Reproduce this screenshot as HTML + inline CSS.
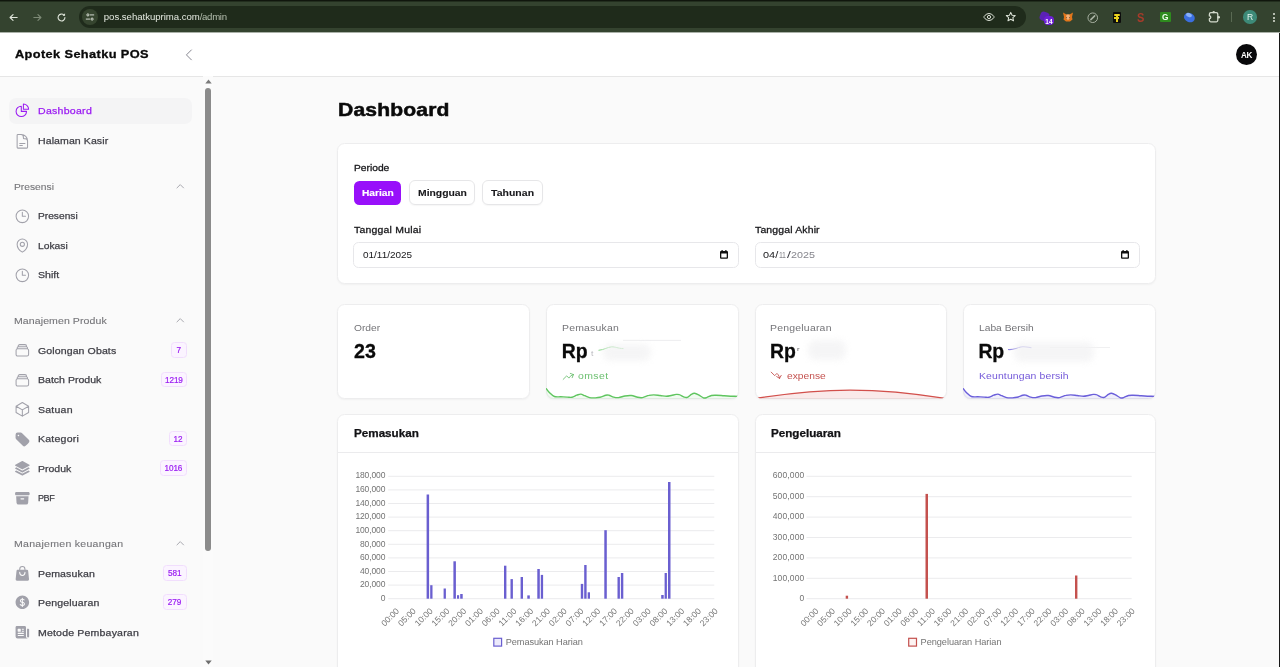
<!DOCTYPE html>
<html lang="id"><head><meta charset="utf-8"><title>Apotek Sehatku POS</title>
<style>
html,body{margin:0;padding:0}
body{width:1280px;height:667px;overflow:hidden;position:relative;background:#fafafa;font-family:'Liberation Sans',sans-serif;}
svg{overflow:visible}
</style></head><body>
<div id="root" style="position:absolute;left:0;top:0;width:1280px;height:667px;will-change:transform">
<div style="position:absolute;left:0px;top:0px;width:1280px;height:32px;background:#34432f"></div>
<div style="position:absolute;left:0px;top:0px;width:1280px;height:1px;background:#10160d"></div>
<div style="position:absolute;left:0px;top:1px;width:1280px;height:1px;background:#222e1e"></div>
<div style="position:absolute;left:79px;top:5.5px;width:947px;height:22.5px;background:#1f2b1b;border-radius:11.5px"></div>
<svg style="position:absolute;left:7.5px;top:11.5px" width="11" height="11" viewBox="0 0 24 24" ><path d="M20 12H5M11 5.5 4.5 12l6.5 6.5" fill="none" stroke="#dfe5da" stroke-width="2.4" stroke-linecap="round" stroke-linejoin="round"/></svg>
<svg style="position:absolute;left:31.5px;top:11.5px" width="11" height="11" viewBox="0 0 24 24" ><path d="M4 12h15M13 5.5l6.500 6.5-6.500 6.500" fill="none" stroke="#7d8a76" stroke-width="2.4" stroke-linecap="round" stroke-linejoin="round"/></svg>
<svg style="position:absolute;left:55.8px;top:11.5px" width="11" height="11" viewBox="0 0 24 24" ><path d="M19.500 12a7.500 7.500 0 1 1-2.200-5.300" fill="none" stroke="#dfe5da" stroke-width="2.400" stroke-linecap="round"/><path d="M19.800 2.500v5.500h-5.500z" fill="#dfe5da"/></svg>
<div style="position:absolute;left:82px;top:9px;width:16px;height:16px;background:#36452f;border-radius:50%"></div>
<svg style="position:absolute;left:85px;top:12px" width="10" height="10" viewBox="0 0 24 24" ><circle cx="7" cy="7" r="2.600" fill="none" stroke="#e3e8df" stroke-width="2.200"/><path d="M13 7h8M3 17h8" stroke="#e3e8df" stroke-width="2.200" stroke-linecap="round"/><circle cx="17" cy="17" r="2.600" fill="none" stroke="#e3e8df" stroke-width="2.200"/></svg>
<span style="position:absolute;left:103.82px;top:12px;font-size:9.6px;line-height:1;font-weight:400;color:#e4e9e0;letter-spacing:-0.032px;white-space:pre;">pos.sehatkuprima.com</span>
<span style="position:absolute;left:199.71px;top:12px;font-size:9.6px;line-height:1;font-weight:400;color:#b4beae;letter-spacing:-0.302px;white-space:pre;">/admin</span>
<svg style="position:absolute;left:983px;top:11px" width="12" height="12" viewBox="0 0 24 24" ><path d="M1.500 12S5.500 5 12 5s10.500 7 10.500 7-4 7-10.500 7S1.500 12 1.500 12Z" fill="none" stroke="#dfe5da" stroke-width="2"/><circle cx="12" cy="12" r="3.200" fill="none" stroke="#dfe5da" stroke-width="2"/></svg>
<svg style="position:absolute;left:1005px;top:11px" width="11.5" height="11.5" viewBox="0 0 24 24" ><path d="M12 2.800l2.800 6 6.500.700-4.900 4.400 1.400 6.500L12 17.100l-5.800 3.300 1.400-6.500L2.700 9.500l6.500-.700z" fill="none" stroke="#dfe5da" stroke-width="2.100" stroke-linejoin="round"/></svg>
<div style="position:absolute;left:1040px;top:12px;width:9px;height:9px;background:#5b21b6;border-radius:3px;transform:rotate(20deg)"></div>
<div style="position:absolute;left:1044px;top:16px;width:10px;height:9px;background:#6d1fd6;border-radius:4px"></div>
<span style="position:absolute;left:1045.34px;top:19px;font-size:6.5px;line-height:1;font-weight:700;color:#fff;letter-spacing:-0.031px;white-space:pre;">14</span>
<svg style="position:absolute;left:1062px;top:11px" width="12" height="12" viewBox="0 0 24 24" ><path d="M2 3l7 4h6l7-4-2 9 1 5-5 4h-8l-5-4 1-5z" fill="#e2761b"/><path d="M9 7h6l1 8-4 3-4-3z" fill="#f5b27a"/><path d="M8 13l2 1M16 13l-2 1" stroke="#3a2a1a" stroke-width="1.500"/></svg>
<svg style="position:absolute;left:1086.5px;top:11.7px" width="11.5" height="11.5" viewBox="0 0 24 24" ><circle cx="12" cy="12" r="10" fill="none" stroke="#aab3a4" stroke-width="2"/><path d="M8 16l8-8" stroke="#aab3a4" stroke-width="3.200" stroke-linecap="round"/></svg>
<div style="position:absolute;left:1112.5px;top:11.5px;width:8.5px;height:11px;background:#0d0d0d;border-radius:1px"></div>
<div style="position:absolute;left:1114px;top:13.5px;width:5.5px;height:2px;background:#e8d21d;border-radius:1px"></div>
<div style="position:absolute;left:1115.8px;top:15px;width:2px;height:6.5px;background:#e8d21d"></div>
<div style="position:absolute;left:1114.3px;top:17.3px;width:5px;height:1.4px;background:#e8d21d"></div>
<span style="position:absolute;left:1136.90px;top:12px;font-size:12px;line-height:1;font-weight:700;color:#a63b2a;letter-spacing:0.000px;white-space:pre;transform:scaleX(0.9216);transform-origin:0 0;">S</span>
<div style="position:absolute;left:1160px;top:12px;width:10.5px;height:10.2px;background:#2e8b1e;border-radius:1px"></div>
<span style="position:absolute;left:1162.28px;top:13px;font-size:8.5px;line-height:1;font-weight:700;color:#f0fff0;letter-spacing:0.000px;white-space:pre;transform:scaleX(0.9762);transform-origin:0 0;">G</span>
<div style="position:absolute;left:1184px;top:13px;width:10.5px;height:8.5px;background:#3b6fe0;border-radius:50%;transform:rotate(25deg)"></div>
<div style="position:absolute;left:1185.5px;top:12.5px;width:6px;height:4px;background:#9cc0ff;border-radius:50%;transform:rotate(25deg);opacity:.8"></div>
<svg style="position:absolute;left:1206.700px;top:8.700px" width="16" height="16" viewBox="0 0 16 16"><path d="M3.900 3.700H9.300a1.500 1.500 0 0 1 1.500 1.500V11.300a1.500 1.500 0 0 1-1.500 1.500H3.900a1.500 1.500 0 0 1-1.500-1.500V9.700a1.400 1.400 0 0 0 0-2.800V5.200a1.500 1.500 0 0 1 1.500-1.500z" fill="none" stroke="#d3dbcd" stroke-width="1.300" stroke-linejoin="round"/><circle cx="6.700" cy="3.100" r="1.200" fill="#d3dbcd"/><circle cx="11.700" cy="8.300" r="1.300" fill="#d3dbcd"/></svg>
<div style="position:absolute;left:1231.3px;top:11.5px;width:1px;height:10.5px;background:#5a6a53"></div>
<div style="position:absolute;left:1243px;top:10.3px;width:13.5px;height:13.5px;background:#3d8a78;border-radius:50%"></div>
<span style="position:absolute;left:1246.91px;top:13px;font-size:8.5px;line-height:1;font-weight:400;color:#e8f5f0;letter-spacing:0.000px;white-space:pre;transform:scaleX(1.0053);transform-origin:0 0;">R</span>
<div style="position:absolute;left:1273.2px;top:13.2px;width:2px;height:2px;background:#dfe5da;border-radius:50%"></div>
<div style="position:absolute;left:1273.2px;top:16.6px;width:2px;height:2px;background:#dfe5da;border-radius:50%"></div>
<div style="position:absolute;left:1273.2px;top:20px;width:2px;height:2px;background:#dfe5da;border-radius:50%"></div>
<div style="position:absolute;left:0px;top:32px;width:1280px;height:44.3px;background:#fff"></div>
<div style="position:absolute;left:0px;top:32px;width:1280px;height:1px;background:#aab1a8"></div>
<div style="position:absolute;left:0px;top:76.3px;width:1280px;height:1px;background:#e6e6e6"></div>
<div style="position:absolute;left:1279px;top:33px;width:1px;height:634px;background:#181818"></div>
<span style="position:absolute;left:15.11px;top:49px;font-size:11px;line-height:1;font-weight:700;color:#0a0a0a;letter-spacing:0.333px;white-space:pre;transform:scaleX(1.1600);transform-origin:0 0;-webkit-text-stroke:0.3px #0a0a0a;">Apotek Sehatku POS</span>
<svg style="position:absolute;left:181.1px;top:46.6px" width="15.8" height="15.8" viewBox="0 0 24 24" ><path d="M15.75 19.5 8.25 12l7.5-7.5" fill="none" stroke="#85858f" stroke-width="1.5" stroke-linecap="round" stroke-linejoin="round"/></svg>
<div style="position:absolute;left:1235.8px;top:43.9px;width:21.2px;height:21.2px;background:#09090b;border-radius:50%"></div>
<span style="position:absolute;left:1241.46px;top:51px;font-size:8.6px;line-height:1;font-weight:700;color:#fff;letter-spacing:-0.450px;white-space:pre;transform:scaleX(0.9431);transform-origin:0 0;">AK</span>
<div style="position:absolute;left:203px;top:76px;width:10px;height:591px;background:#fbfbfb"></div>
<svg style="position:absolute;left:204.500px;top:78.800px" width="7" height="5" viewBox="0 0 7 5"><path d="M3.500 .5 6.700 4.500H.3z" fill="#7a7a7a"/></svg>
<div style="position:absolute;left:205.3px;top:88.3px;width:6px;height:463px;background:#8b8b8b;border-radius:3px"></div>
<svg style="position:absolute;left:204.500px;top:659.500px" width="7" height="5" viewBox="0 0 7 5"><path d="M3.500 4.500 6.700 .5H.3z" fill="#6e6e6e"/></svg>
<div style="position:absolute;left:9.4px;top:97.7px;width:183px;height:26.8px;background:#f4f4f5;border-radius:7px"></div>
<svg style="position:absolute;left:14.1px;top:102.45px" width="16.7" height="16.7" viewBox="0 0 24 24" ><path d="M10.5 6a7.5 7.5 0 1 0 7.5 7.5h-7.5V6Z" fill="none" stroke="#9b1cf2" stroke-width="1.5" stroke-linecap="round" stroke-linejoin="round"/><path d="M13.5 10.5H21A7.5 7.5 0 0 0 13.5 3v7.5Z" fill="none" stroke="#9b1cf2" stroke-width="1.5" stroke-linecap="round" stroke-linejoin="round"/></svg>
<span style="position:absolute;left:38.28px;top:107px;font-size:9.1px;line-height:1;font-weight:400;color:#9b1cf2;letter-spacing:0.233px;white-space:pre;transform:scaleX(1.1600);transform-origin:0 0;-webkit-text-stroke:0.25px #9b1cf2;">Dashboard</span>
<svg style="position:absolute;left:14.1px;top:132.55px" width="16.7" height="16.7" viewBox="0 0 24 24" ><path d="M19.5 14.25v-2.625a3.375 3.375 0 0 0-3.375-3.375h-1.5A1.125 1.125 0 0 1 13.5 7.125v-1.5a3.375 3.375 0 0 0-3.375-3.375H8.25m0 12.75h7.5m-7.5 3H12M10.5 2.25H5.625c-.621 0-1.125.504-1.125 1.125v17.25c0 .621.504 1.125 1.125 1.125h12.750c.621 0 1.125-.504 1.125-1.125V11.250a9 9 0 0 0-9-9Z" fill="none" stroke="#a1a1aa" stroke-width="1.5" stroke-linecap="round" stroke-linejoin="round"/></svg>
<span style="position:absolute;left:38.12px;top:137px;font-size:9.1px;line-height:1;font-weight:400;color:#3f3f46;letter-spacing:0.070px;white-space:pre;transform:scaleX(1.1600);transform-origin:0 0;-webkit-text-stroke:0.25px #3f3f46;">Halaman Kasir</span>
<span style="position:absolute;left:14.34px;top:183px;font-size:9.1px;line-height:1;font-weight:400;color:#747478;letter-spacing:0.000px;white-space:pre;transform:scaleX(1.1286);transform-origin:0 0;-webkit-text-stroke:0.1px #747478;">Presensi</span>
<svg style="position:absolute;left:175.3px;top:180.6px" width="10.5" height="10.5" viewBox="0 0 24 24" ><path d="m4.5 15.75 7.5-7.5 7.5 7.5" fill="none" stroke="#85858f" stroke-width="1.6" stroke-linecap="round" stroke-linejoin="round"/></svg>
<svg style="position:absolute;left:14.1px;top:207.55px" width="16.7" height="16.7" viewBox="0 0 24 24" ><path d="M12 6v6h4.5m4.5 0a9 9 0 1 1-18 0 9 9 0 0 1 18 0Z" fill="none" stroke="#a1a1aa" stroke-width="1.5" stroke-linecap="round" stroke-linejoin="round"/></svg>
<span style="position:absolute;left:38.16px;top:212px;font-size:9.1px;line-height:1;font-weight:400;color:#3f3f46;letter-spacing:0.000px;white-space:pre;transform:scaleX(1.1218);transform-origin:0 0;-webkit-text-stroke:0.25px #3f3f46;">Presensi</span>
<svg style="position:absolute;left:14.1px;top:237.05px" width="16.7" height="16.7" viewBox="0 0 24 24" ><path d="M15 10.5a3 3 0 1 1-6 0 3 3 0 0 1 6 0Z" fill="none" stroke="#a1a1aa" stroke-width="1.5" stroke-linecap="round" stroke-linejoin="round"/><path d="M19.5 10.5c0 7.142-7.5 11.250-7.5 11.250S4.5 17.642 4.500 10.500a7.500 7.500 0 1 1 15 0Z" fill="none" stroke="#a1a1aa" stroke-width="1.5" stroke-linecap="round" stroke-linejoin="round"/></svg>
<span style="position:absolute;left:38.08px;top:242px;font-size:9.1px;line-height:1;font-weight:400;color:#3f3f46;letter-spacing:0.000px;white-space:pre;transform:scaleX(1.1321);transform-origin:0 0;-webkit-text-stroke:0.25px #3f3f46;">Lokasi</span>
<svg style="position:absolute;left:14.1px;top:266.55px" width="16.7" height="16.7" viewBox="0 0 24 24" ><path d="M12 6v6h4.5m4.5 0a9 9 0 1 1-18 0 9 9 0 0 1 18 0Z" fill="none" stroke="#a1a1aa" stroke-width="1.5" stroke-linecap="round" stroke-linejoin="round"/></svg>
<span style="position:absolute;left:38.27px;top:271px;font-size:9.1px;line-height:1;font-weight:400;color:#3f3f46;letter-spacing:0.003px;white-space:pre;transform:scaleX(1.1600);transform-origin:0 0;-webkit-text-stroke:0.25px #3f3f46;">Shift</span>
<span style="position:absolute;left:14.04px;top:317px;font-size:9.1px;line-height:1;font-weight:400;color:#747478;letter-spacing:0.069px;white-space:pre;transform:scaleX(1.1600);transform-origin:0 0;-webkit-text-stroke:0.1px #747478;">Manajemen Produk</span>
<svg style="position:absolute;left:175.3px;top:315.00000000000006px" width="10.5" height="10.5" viewBox="0 0 24 24" ><path d="m4.5 15.75 7.5-7.5 7.5 7.5" fill="none" stroke="#85858f" stroke-width="1.6" stroke-linecap="round" stroke-linejoin="round"/></svg>
<svg style="position:absolute;left:14.1px;top:342.25px" width="16.7" height="16.7" viewBox="0 0 24 24" ><path d="M6 6.878V6a2.250 2.250 0 0 1 2.250-2.250h7.500A2.250 2.250 0 0 1 18 6v.878m-12 0c.235-.083.487-.128.750-.128h10.500c.263 0 .515.045.750.128m-12 0A2.250 2.250 0 0 0 4.500 9v.878m13.500-3A2.250 2.250 0 0 1 19.500 9v.878m0 0a2.246 2.246 0 0 0-.750-.128H5.250c-.263 0-.515.045-.750.128m15 0A2.250 2.250 0 0 1 21 12v6a2.250 2.250 0 0 1-2.250 2.250H5.250A2.250 2.250 0 0 1 3 18v-6c0-.980.626-1.813 1.500-2.122" fill="none" stroke="#a1a1aa" stroke-width="1.5" stroke-linecap="round" stroke-linejoin="round"/></svg>
<span style="position:absolute;left:38.37px;top:347px;font-size:9.1px;line-height:1;font-weight:400;color:#3f3f46;letter-spacing:0.090px;white-space:pre;transform:scaleX(1.1600);transform-origin:0 0;-webkit-text-stroke:0.25px #3f3f46;">Golongan Obats</span>
<div style="position:absolute;left:171px;top:342.20000000000005px;width:15.599999999999994px;height:15.4px;background:#fbf4ff;border:1px solid #f1defd;border-radius:3.5px;box-sizing:border-box"></div>
<span style="position:absolute;left:176.52px;top:347px;font-size:8.2px;line-height:1;font-weight:400;color:#9b1cf2;letter-spacing:-0.100px;white-space:pre;-webkit-text-stroke:0.2px #9b1cf2;">7</span>
<svg style="position:absolute;left:14.1px;top:371.75px" width="16.7" height="16.7" viewBox="0 0 24 24" ><path d="M6 6.878V6a2.250 2.250 0 0 1 2.250-2.250h7.500A2.250 2.250 0 0 1 18 6v.878m-12 0c.235-.083.487-.128.750-.128h10.500c.263 0 .515.045.750.128m-12 0A2.250 2.250 0 0 0 4.500 9v.878m13.500-3A2.250 2.250 0 0 1 19.500 9v.878m0 0a2.246 2.246 0 0 0-.750-.128H5.250c-.263 0-.515.045-.750.128m15 0A2.250 2.250 0 0 1 21 12v6a2.250 2.250 0 0 1-2.250 2.250H5.250A2.250 2.250 0 0 1 3 18v-6c0-.980.626-1.813 1.500-2.122" fill="none" stroke="#a1a1aa" stroke-width="1.5" stroke-linecap="round" stroke-linejoin="round"/></svg>
<span style="position:absolute;left:38.12px;top:376px;font-size:9.1px;line-height:1;font-weight:400;color:#3f3f46;letter-spacing:0.000px;white-space:pre;transform:scaleX(1.1594);transform-origin:0 0;-webkit-text-stroke:0.25px #3f3f46;">Batch Produk</span>
<div style="position:absolute;left:161.3px;top:371.70000000000005px;width:25.299999999999983px;height:15.4px;background:#fbf4ff;border:1px solid #f1defd;border-radius:3.5px;box-sizing:border-box"></div>
<span style="position:absolute;left:164.99px;top:377px;font-size:8.2px;line-height:1;font-weight:400;color:#9b1cf2;letter-spacing:-0.100px;white-space:pre;-webkit-text-stroke:0.2px #9b1cf2;">1219</span>
<svg style="position:absolute;left:14.1px;top:401.25px" width="16.7" height="16.7" viewBox="0 0 24 24" ><path d="m21 7.500-9-5.250L3 7.500m18 0-9 5.250m9-5.250v9l-9 5.250M3 7.500l9 5.250M3 7.500v9l9 5.250m0-9v9" fill="none" stroke="#a1a1aa" stroke-width="1.5" stroke-linecap="round" stroke-linejoin="round"/></svg>
<span style="position:absolute;left:38.42px;top:406px;font-size:9.1px;line-height:1;font-weight:400;color:#3f3f46;letter-spacing:0.191px;white-space:pre;transform:scaleX(1.1600);transform-origin:0 0;-webkit-text-stroke:0.25px #3f3f46;">Satuan</span>
<svg style="position:absolute;left:14.1px;top:430.75px" width="16.7" height="16.7" viewBox="0 0 24 24" ><path d="M5.250 2.250a3 3 0 0 0-3 3v4.318a3 3 0 0 0 .879 2.121l9.580 9.581c.920.920 2.390 1.186 3.548.428a18.849 18.849 0 0 0 5.441-5.440c.758-1.160.492-2.629-.428-3.548l-9.580-9.581a3 3 0 0 0-2.122-.879H5.250ZM6.375 7.500a1.125 1.125 0 1 0 0-2.250 1.125 1.125 0 0 0 0 2.250Z" fill="#a1a1aa" fill-rule="evenodd" clip-rule="evenodd"/></svg>
<span style="position:absolute;left:38.44px;top:435px;font-size:9.1px;line-height:1;font-weight:400;color:#3f3f46;letter-spacing:0.185px;white-space:pre;transform:scaleX(1.1600);transform-origin:0 0;-webkit-text-stroke:0.25px #3f3f46;">Kategori</span>
<div style="position:absolute;left:169.3px;top:430.70000000000005px;width:17.299999999999983px;height:15.4px;background:#fbf4ff;border:1px solid #f1defd;border-radius:3.5px;box-sizing:border-box"></div>
<span style="position:absolute;left:173.45px;top:436px;font-size:8.2px;line-height:1;font-weight:400;color:#9b1cf2;letter-spacing:-0.100px;white-space:pre;-webkit-text-stroke:0.2px #9b1cf2;">12</span>
<svg style="position:absolute;left:14.1px;top:460.25px" width="16.7" height="16.7" viewBox="0 0 24 24" ><path d="M11.644 1.590a.750.750 0 0 1 .712 0l9.750 5.250a.750.750 0 0 1 0 1.320l-9.750 5.250a.750.750 0 0 1-.712 0l-9.750-5.250a.750.750 0 0 1 0-1.320l9.750-5.250Z" fill="#a1a1aa" fill-rule="evenodd" clip-rule="evenodd"/><path d="m3.265 10.602 7.668 4.129a2.250 2.250 0 0 0 2.134 0l7.668-4.130 1.370.739a.750.750 0 0 1 0 1.320l-9.750 5.250a.750.750 0 0 1-.710 0l-9.750-5.250a.750.750 0 0 1 0-1.320l1.370-.738Z" fill="#a1a1aa" fill-rule="evenodd" clip-rule="evenodd"/><path d="m10.933 19.231-7.668-4.130-1.370.739a.750.750 0 0 0 0 1.320l9.750 5.250c.221.120.489.120.710 0l9.750-5.250a.750.750 0 0 0 0-1.320l-1.370-.738-7.668 4.130a2.250 2.250 0 0 1-2.134-.001Z" fill="#a1a1aa" fill-rule="evenodd" clip-rule="evenodd"/></svg>
<span style="position:absolute;left:38.30px;top:465px;font-size:9.1px;line-height:1;font-weight:400;color:#3f3f46;letter-spacing:0.000px;white-space:pre;transform:scaleX(1.1541);transform-origin:0 0;-webkit-text-stroke:0.25px #3f3f46;">Produk</span>
<div style="position:absolute;left:160.3px;top:460.20000000000005px;width:26.299999999999983px;height:15.4px;background:#fbf4ff;border:1px solid #f1defd;border-radius:3.5px;box-sizing:border-box"></div>
<span style="position:absolute;left:164.49px;top:465px;font-size:8.2px;line-height:1;font-weight:400;color:#9b1cf2;letter-spacing:-0.100px;white-space:pre;-webkit-text-stroke:0.2px #9b1cf2;">1016</span>
<svg style="position:absolute;left:14.1px;top:489.75px" width="16.7" height="16.7" viewBox="0 0 24 24" ><path d="M3.375 3C2.339 3 1.500 3.840 1.500 4.875v.750c0 1.036.840 1.875 1.875 1.875h17.250c1.035 0 1.875-.840 1.875-1.875v-.750C22.500 3.839 21.660 3 20.625 3H3.375Z" fill="#a1a1aa" fill-rule="evenodd" clip-rule="evenodd"/><path d="m3.087 9 .540 9.176A3 3 0 0 0 6.620 21h10.757a3 3 0 0 0 2.995-2.824L20.913 9H3.087Zm6.163 3.750A.750.750 0 0 1 10 12h4a.750.750 0 0 1 0 1.500h-4a.750.750 0 0 1-.750-.750Z" fill="#a1a1aa" fill-rule="evenodd" clip-rule="evenodd"/></svg>
<span style="position:absolute;left:38.27px;top:494px;font-size:9.1px;line-height:1;font-weight:400;color:#3f3f46;letter-spacing:-0.450px;white-space:pre;transform:scaleX(0.9951);transform-origin:0 0;-webkit-text-stroke:0.25px #3f3f46;">PBF</span>
<span style="position:absolute;left:14.19px;top:540px;font-size:9.1px;line-height:1;font-weight:400;color:#747478;letter-spacing:0.236px;white-space:pre;transform:scaleX(1.1600);transform-origin:0 0;-webkit-text-stroke:0.1px #747478;">Manajemen keuangan</span>
<svg style="position:absolute;left:175.3px;top:537.7px" width="10.5" height="10.5" viewBox="0 0 24 24" ><path d="m4.5 15.75 7.5-7.5 7.5 7.5" fill="none" stroke="#85858f" stroke-width="1.6" stroke-linecap="round" stroke-linejoin="round"/></svg>
<svg style="position:absolute;left:14.1px;top:565.4499999999999px" width="16.7" height="16.7" viewBox="0 0 24 24" ><path d="M7.500 6v.750H5.513c-.960 0-1.764.724-1.865 1.679l-1.263 12A1.875 1.875 0 0 0 4.250 22.500h15.500a1.875 1.875 0 0 0 1.865-2.071l-1.263-12a1.875 1.875 0 0 0-1.865-1.679H16.500V6a4.500 4.500 0 1 0-9 0ZM12 3a3 3 0 0 0-3 3v.750h6V6a3 3 0 0 0-3-3Zm-3 8.250a3 3 0 1 0 6 0v-.750a.750.750 0 0 1 1.500 0v.750a4.500 4.500 0 1 1-9 0v-.750a.750.750 0 0 1 1.500 0v.750Z" fill="#a1a1aa" fill-rule="evenodd" clip-rule="evenodd"/></svg>
<span style="position:absolute;left:38.12px;top:570px;font-size:9.1px;line-height:1;font-weight:400;color:#3f3f46;letter-spacing:0.114px;white-space:pre;transform:scaleX(1.1600);transform-origin:0 0;-webkit-text-stroke:0.25px #3f3f46;">Pemasukan</span>
<div style="position:absolute;left:163.1px;top:565.4px;width:23.5px;height:15.4px;background:#fbf4ff;border:1px solid #f1defd;border-radius:3.5px;box-sizing:border-box"></div>
<span style="position:absolute;left:168.11px;top:570px;font-size:8.2px;line-height:1;font-weight:400;color:#9b1cf2;letter-spacing:-0.100px;white-space:pre;-webkit-text-stroke:0.2px #9b1cf2;">581</span>
<svg style="position:absolute;left:14.1px;top:594.4499999999999px" width="16.7" height="16.7" viewBox="0 0 24 24" ><path d="M10.464 8.746c.227-.180.497-.311.786-.394v2.795a2.252 2.252 0 0 1-.786-.393c-.394-.313-.546-.681-.546-1.004 0-.323.152-.691.546-1.004ZM12.750 15.662v-2.824c.347.085.664.228.921.421.427.320.579.686.579.991 0 .305-.152.671-.579.991a2.534 2.534 0 0 1-.921.420Z" fill="#a1a1aa" fill-rule="evenodd" clip-rule="evenodd"/><path d="M12 2.250c-5.385 0-9.750 4.365-9.750 9.750s4.365 9.750 9.750 9.750 9.750-4.365 9.750-9.750S17.385 2.250 12 2.250ZM12.750 6a.750.750 0 0 0-1.500 0v.816a3.836 3.836 0 0 0-1.720.756c-.712.566-1.112 1.350-1.112 2.178 0 .829.400 1.612 1.113 2.178.502.400 1.102.647 1.719.756v2.978a2.536 2.536 0 0 1-.921-.421l-.879-.660a.750.750 0 0 0-.900 1.200l.879.660c.533.400 1.169.645 1.821.750V18a.750.750 0 0 0 1.500 0v-.810a4.124 4.124 0 0 0 1.821-.749c.745-.559 1.179-1.344 1.179-2.191 0-.847-.434-1.632-1.179-2.191a4.122 4.122 0 0 0-1.821-.750V8.354c.290.082.559.213.786.393l.415.330a.750.750 0 0 0 .933-1.175l-.415-.330a3.836 3.836 0 0 0-1.719-.755V6Z" fill="#a1a1aa" fill-rule="evenodd" clip-rule="evenodd"/></svg>
<span style="position:absolute;left:38.44px;top:599px;font-size:9.1px;line-height:1;font-weight:400;color:#3f3f46;letter-spacing:0.130px;white-space:pre;transform:scaleX(1.1600);transform-origin:0 0;-webkit-text-stroke:0.25px #3f3f46;">Pengeluaran</span>
<div style="position:absolute;left:162.5px;top:594.4px;width:24.099999999999994px;height:15.4px;background:#fbf4ff;border:1px solid #f1defd;border-radius:3.5px;box-sizing:border-box"></div>
<span style="position:absolute;left:167.81px;top:599px;font-size:8.2px;line-height:1;font-weight:400;color:#9b1cf2;letter-spacing:-0.100px;white-space:pre;-webkit-text-stroke:0.2px #9b1cf2;">279</span>
<svg style="position:absolute;left:14.1px;top:623.9499999999999px" width="16.7" height="16.7" viewBox="0 0 24 24" ><path d="M4.125 3C3.089 3 2.250 3.840 2.250 4.875V18a3 3 0 0 0 3 3h15a3 3 0 0 1-3-3V4.875C17.250 3.839 16.410 3 15.375 3H4.125ZM12 9.750a.750.750 0 0 0 0 1.500h1.500a.750.750 0 0 0 0-1.500H12Zm-.750-2.250a.750.750 0 0 1 .750-.750h1.500a.750.750 0 0 1 0 1.500H12a.750.750 0 0 1-.750-.750ZM6 12.750a.750.750 0 0 0 0 1.500h7.500a.750.750 0 0 0 0-1.500H6Zm-.750 3.750a.750.750 0 0 1 .750-.750h7.500a.750.750 0 0 1 0 1.500H6a.750.750 0 0 1-.750-.750ZM6 6.750a.750.750 0 0 0-.750.750v3c0 .414.336.750.750.750h3a.750.750 0 0 0 .750-.750v-3A.750.750 0 0 0 9 6.750H6Z" fill="#a1a1aa" fill-rule="evenodd" clip-rule="evenodd"/><path d="M18.750 6.750h1.875c.621 0 1.125.504 1.125 1.125V18a1.500 1.500 0 0 1-3 0V6.750Z" fill="#a1a1aa" fill-rule="evenodd" clip-rule="evenodd"/></svg>
<span style="position:absolute;left:38.12px;top:629px;font-size:9.1px;line-height:1;font-weight:400;color:#3f3f46;letter-spacing:0.153px;white-space:pre;transform:scaleX(1.1600);transform-origin:0 0;-webkit-text-stroke:0.25px #3f3f46;">Metode Pembayaran</span>
<span style="position:absolute;left:337.53px;top:101px;font-size:18.2px;line-height:1;font-weight:700;color:#0a0a0a;letter-spacing:0.138px;white-space:pre;transform:scaleX(1.1600);transform-origin:0 0;-webkit-text-stroke:0.5px #0a0a0a;">Dashboard</span>
<div style="position:absolute;left:337px;top:143px;width:819px;height:141px;background:#fff;border:1px solid #ededee;border-radius:7.5px;box-shadow:0 1px 2px rgba(0,0,0,.04);box-sizing:border-box"></div>
<span style="position:absolute;left:353.80px;top:164px;font-size:9.0px;line-height:1;font-weight:400;color:#18181b;letter-spacing:0.000px;white-space:pre;transform:scaleX(1.1370);transform-origin:0 0;-webkit-text-stroke:0.28px #18181b;">Periode</span>
<div style="position:absolute;left:354px;top:181px;width:47.2px;height:24px;background:#9810fa;border-radius:5.5px"></div>
<span style="position:absolute;left:361.80px;top:189px;font-size:9.0px;line-height:1;font-weight:700;color:#fff;letter-spacing:-0.000px;white-space:pre;transform:scaleX(1.1315);transform-origin:0 0;-webkit-text-stroke:0.15px #fff;">Harian</span>
<div style="position:absolute;left:409px;top:180.4px;width:66.4px;height:25px;background:#fff;border:1px solid #e6e6e8;border-radius:6px;box-sizing:border-box;box-shadow:0 1px 1.5px rgba(0,0,0,.04)"></div>
<span style="position:absolute;left:417.77px;top:189px;font-size:9.0px;line-height:1;font-weight:700;color:#18181b;letter-spacing:0.000px;white-space:pre;transform:scaleX(1.1516);transform-origin:0 0;-webkit-text-stroke:0.1px #18181b;">Mingguan</span>
<div style="position:absolute;left:482px;top:180.4px;width:61px;height:25px;background:#fff;border:1px solid #e6e6e8;border-radius:6px;box-sizing:border-box;box-shadow:0 1px 1.5px rgba(0,0,0,.04)"></div>
<span style="position:absolute;left:491.33px;top:189px;font-size:9.0px;line-height:1;font-weight:700;color:#18181b;letter-spacing:0.042px;white-space:pre;transform:scaleX(1.1600);transform-origin:0 0;-webkit-text-stroke:0.1px #18181b;">Tahunan</span>
<span style="position:absolute;left:354.34px;top:226px;font-size:9.0px;line-height:1;font-weight:400;color:#18181b;letter-spacing:0.188px;white-space:pre;transform:scaleX(1.1600);transform-origin:0 0;-webkit-text-stroke:0.28px #18181b;">Tanggal Mulai</span>
<span style="position:absolute;left:754.69px;top:226px;font-size:9.0px;line-height:1;font-weight:400;color:#18181b;letter-spacing:0.137px;white-space:pre;transform:scaleX(1.1600);transform-origin:0 0;-webkit-text-stroke:0.28px #18181b;">Tanggal Akhir</span>
<div style="position:absolute;left:353px;top:242px;width:386px;height:25.5px;background:#fff;border:1px solid #e7e7ea;border-radius:5.5px;box-sizing:border-box"></div>
<div style="position:absolute;left:755px;top:242px;width:385px;height:25.5px;background:#fff;border:1px solid #e7e7ea;border-radius:5.5px;box-sizing:border-box"></div>
<span style="position:absolute;left:362.56px;top:250px;font-size:9.6px;line-height:1;font-weight:400;color:#18181b;letter-spacing:0.000px;white-space:pre;transform:scaleX(1.0372);transform-origin:0 0;">01/11/2025</span>
<span style="position:absolute;left:763.20px;top:250px;font-size:9.6px;line-height:1;font-weight:400;color:#18181b;letter-spacing:0.000px;white-space:pre;transform:scaleX(1.1391);transform-origin:0 0;">04/</span>
<span style="position:absolute;left:779.38px;top:250px;font-size:9.6px;line-height:1;font-weight:400;color:#85858c;letter-spacing:-0.450px;white-space:pre;transform:scaleX(0.7298);transform-origin:0 0;">11</span>
<span style="position:absolute;left:786.80px;top:250px;font-size:9.6px;line-height:1;font-weight:400;color:#3a3a40;letter-spacing:0.000px;white-space:pre;transform:scaleX(1.4222);transform-origin:0 0;">/</span>
<span style="position:absolute;left:791.23px;top:250px;font-size:9.6px;line-height:1;font-weight:400;color:#85858c;letter-spacing:0.000px;white-space:pre;transform:scaleX(1.1213);transform-origin:0 0;">2025</span>
<svg style="position:absolute;left:720.3px;top:250.300px" width="8" height="8.8" viewBox="0 0 16 17.600"><path d="M2 2.200h12a2 2 0 0 1 2 2v11.400a2 2 0 0 1-2 2H2a2 2 0 0 1-2-2V4.200a2 2 0 0 1 2-2Zm.6 4.600v8.200h10.800V6.800Z" fill="#111" fill-rule="evenodd"/><rect x="3" y="0" width="2.400" height="3.500" fill="#111"/><rect x="10.600" y="0" width="2.400" height="3.500" fill="#111"/></svg>
<svg style="position:absolute;left:1121.3px;top:250.300px" width="8" height="8.8" viewBox="0 0 16 17.600"><path d="M2 2.200h12a2 2 0 0 1 2 2v11.400a2 2 0 0 1-2 2H2a2 2 0 0 1-2-2V4.200a2 2 0 0 1 2-2Zm.6 4.600v8.200h10.800V6.800Z" fill="#111" fill-rule="evenodd"/><rect x="3" y="0" width="2.400" height="3.500" fill="#111"/><rect x="10.600" y="0" width="2.400" height="3.500" fill="#111"/></svg>
<div style="position:absolute;left:337px;top:304px;width:193px;height:95px;background:#fff;border:1px solid #ededee;border-radius:7.5px;box-shadow:0 1px 2px rgba(0,0,0,.04);box-sizing:border-box;overflow:hidden"></div>
<div style="position:absolute;left:546px;top:304px;width:193px;height:95px;background:#fff;border:1px solid #ededee;border-radius:7.5px;box-shadow:0 1px 2px rgba(0,0,0,.04);box-sizing:border-box;overflow:hidden"></div>
<div style="position:absolute;left:755px;top:304px;width:192px;height:95px;background:#fff;border:1px solid #ededee;border-radius:7.5px;box-shadow:0 1px 2px rgba(0,0,0,.04);box-sizing:border-box;overflow:hidden"></div>
<div style="position:absolute;left:963px;top:304px;width:193px;height:95px;background:#fff;border:1px solid #ededee;border-radius:7.5px;box-shadow:0 1px 2px rgba(0,0,0,.04);box-sizing:border-box;overflow:hidden"></div>
<span style="position:absolute;left:353.81px;top:324px;font-size:9.0px;line-height:1;font-weight:400;color:#747478;letter-spacing:0.000px;white-space:pre;transform:scaleX(1.1373);transform-origin:0 0;">Order</span>
<span style="position:absolute;left:353.84px;top:342px;font-size:19.4px;line-height:1;font-weight:700;color:#0a0a0a;letter-spacing:0.000px;white-space:pre;transform:scaleX(1.0126);transform-origin:0 0;-webkit-text-stroke:0.3px #0a0a0a;">23</span>
<span style="position:absolute;left:562.24px;top:324px;font-size:9.0px;line-height:1;font-weight:400;color:#747478;letter-spacing:0.180px;white-space:pre;transform:scaleX(1.1600);transform-origin:0 0;">Pemasukan</span>
<span style="position:absolute;left:561.83px;top:342px;font-size:19.4px;line-height:1;font-weight:700;color:#0a0a0a;letter-spacing:-0.064px;white-space:pre;-webkit-text-stroke:0.3px #0a0a0a;">Rp</span>
<span style="position:absolute;left:770.26px;top:324px;font-size:9.0px;line-height:1;font-weight:400;color:#747478;letter-spacing:0.194px;white-space:pre;transform:scaleX(1.1600);transform-origin:0 0;">Pengeluaran</span>
<span style="position:absolute;left:770.06px;top:342px;font-size:19.4px;line-height:1;font-weight:700;color:#0a0a0a;letter-spacing:-0.086px;white-space:pre;-webkit-text-stroke:0.3px #0a0a0a;">Rp</span>
<span style="position:absolute;left:978.81px;top:324px;font-size:9.0px;line-height:1;font-weight:400;color:#747478;letter-spacing:0.000px;white-space:pre;transform:scaleX(1.1379);transform-origin:0 0;">Laba Bersih</span>
<span style="position:absolute;left:978.53px;top:342px;font-size:19.4px;line-height:1;font-weight:700;color:#0a0a0a;letter-spacing:-0.152px;white-space:pre;-webkit-text-stroke:0.3px #0a0a0a;">Rp</span>
<svg style="position:absolute;left:562.4px;top:369.6px" width="12.5" height="12.5" viewBox="0 0 24 24" ><path d="M2.25 18 9 11.25l4.306 4.306a11.950 11.950 0 0 1 5.814-5.518l2.740-1.220m0 0-5.940-2.281m5.940 2.280-2.280 5.941" fill="none" stroke="#6cc070" stroke-width="1.7" stroke-linecap="round" stroke-linejoin="round"/></svg>
<span style="position:absolute;left:578.21px;top:372px;font-size:9.0px;line-height:1;font-weight:400;color:#6cc070;letter-spacing:0.347px;white-space:pre;transform:scaleX(1.1600);transform-origin:0 0;">omset</span>
<svg style="position:absolute;left:770.4px;top:369.4px" width="12.5" height="12.5" viewBox="0 0 24 24" ><path d="M2.25 6 9 12.75l4.286-4.286a11.948 11.948 0 0 1 4.306 6.430l.776 2.898m0 0 3.182-5.511m-3.182 5.510-5.511-3.181" fill="none" stroke="#c4524f" stroke-width="1.7" stroke-linecap="round" stroke-linejoin="round"/></svg>
<span style="position:absolute;left:786.60px;top:372px;font-size:9.0px;line-height:1;font-weight:400;color:#c4524f;letter-spacing:0.000px;white-space:pre;transform:scaleX(1.1372);transform-origin:0 0;">expense</span>
<span style="position:absolute;left:978.63px;top:372px;font-size:9.0px;line-height:1;font-weight:400;color:#7459d9;letter-spacing:0.103px;white-space:pre;transform:scaleX(1.1600);transform-origin:0 0;">Keuntungan bersih</span>
<svg style="position:absolute;left:0;top:0" width="1280" height="667" viewBox="0 0 1280 667"><defs><clipPath id="c546"><rect x="546" y="304" width="193" height="95" rx="7.5"/></clipPath></defs><g clip-path="url(#c546)"><path d="M546.1 388.3C546.7 389.1 548.2 391.4 549.6 392.8C551.0 394.2 552.5 395.8 554.4 396.5C556.3 397.2 558.7 396.7 560.8 396.8C562.9 396.9 565.3 397.0 567.2 397.1C569.1 397.2 570.4 397.6 572.0 397.3C573.6 397.0 575.3 395.7 576.8 395.2C578.3 394.7 579.5 394.0 580.8 394.1C582.1 394.2 583.3 395.1 584.8 395.7C586.3 396.3 588.0 397.2 589.6 397.6C591.2 398.0 592.8 397.9 594.5 397.9C596.2 397.8 598.1 397.8 600.0 397.3C601.9 396.9 604.2 395.6 605.7 395.2C607.2 394.8 607.6 394.9 608.9 395.2C610.2 395.5 612.1 396.7 613.7 397.1C615.3 397.5 616.6 397.8 618.5 397.6C620.4 397.4 622.8 396.4 624.9 396.0C627.0 395.6 629.2 395.3 631.3 395.5C633.4 395.7 635.8 396.9 637.7 397.3C639.6 397.7 640.6 397.9 642.5 397.6C644.4 397.3 647.0 395.8 648.9 395.4C650.8 394.9 651.8 394.9 653.7 394.9C655.6 394.9 658.0 395.3 660.1 395.5C662.2 395.7 664.6 396.3 666.5 396.3C668.4 396.3 669.7 395.8 671.3 395.5C672.9 395.2 674.8 394.5 676.1 394.4C677.4 394.3 678.0 394.2 679.3 394.7C680.6 395.1 682.8 396.7 684.1 397.1C685.4 397.5 686.1 397.8 687.3 397.3C688.5 396.9 690.1 395.1 691.3 394.4C692.5 393.7 693.3 393.2 694.5 393.3C695.7 393.4 697.1 394.1 698.6 394.9C700.1 395.7 702.1 397.4 703.4 397.9C704.7 398.3 705.3 398.0 706.6 397.6C707.9 397.2 709.8 395.9 711.4 395.5C713.0 395.1 714.1 395.2 716.2 395.2C718.3 395.2 721.1 395.5 724.2 395.7C727.3 395.9 732.1 396.2 734.6 396.3C737.1 396.4 738.3 396.5 739.0 396.5V400H546Z" fill="rgba(80,200,80,.08)"/><path d="M546.1 388.3C546.7 389.1 548.2 391.4 549.6 392.8C551.0 394.2 552.5 395.8 554.4 396.5C556.3 397.2 558.7 396.7 560.8 396.8C562.9 396.9 565.3 397.0 567.2 397.1C569.1 397.2 570.4 397.6 572.0 397.3C573.6 397.0 575.3 395.7 576.8 395.2C578.3 394.7 579.5 394.0 580.8 394.1C582.1 394.2 583.3 395.1 584.8 395.7C586.3 396.3 588.0 397.2 589.6 397.6C591.2 398.0 592.8 397.9 594.5 397.9C596.2 397.8 598.1 397.8 600.0 397.3C601.9 396.9 604.2 395.6 605.7 395.2C607.2 394.8 607.6 394.9 608.9 395.2C610.2 395.5 612.1 396.7 613.7 397.1C615.3 397.5 616.6 397.8 618.5 397.6C620.4 397.4 622.8 396.4 624.9 396.0C627.0 395.6 629.2 395.3 631.3 395.5C633.4 395.7 635.8 396.9 637.7 397.3C639.6 397.7 640.6 397.9 642.5 397.6C644.4 397.3 647.0 395.8 648.9 395.4C650.8 394.9 651.8 394.9 653.7 394.9C655.6 394.9 658.0 395.3 660.1 395.5C662.2 395.7 664.6 396.3 666.5 396.3C668.4 396.3 669.7 395.8 671.3 395.5C672.9 395.2 674.8 394.5 676.1 394.4C677.4 394.3 678.0 394.2 679.3 394.7C680.6 395.1 682.8 396.7 684.1 397.1C685.4 397.5 686.1 397.8 687.3 397.3C688.5 396.9 690.1 395.1 691.3 394.4C692.5 393.7 693.3 393.2 694.5 393.3C695.7 393.4 697.1 394.1 698.6 394.9C700.1 395.7 702.1 397.4 703.4 397.9C704.7 398.3 705.3 398.0 706.6 397.6C707.9 397.2 709.8 395.9 711.4 395.5C713.0 395.1 714.1 395.2 716.2 395.2C718.3 395.2 721.1 395.5 724.2 395.7C727.3 395.9 732.1 396.2 734.6 396.3C737.1 396.4 738.3 396.5 739.0 396.5" fill="none" stroke="#5fc55f" stroke-width="1.400" stroke-linejoin="round"/></g></svg>
<svg style="position:absolute;left:0;top:0" width="1280" height="667" viewBox="0 0 1280 667"><defs><clipPath id="c963"><rect x="963" y="304" width="193" height="95" rx="7.5"/></clipPath></defs><g clip-path="url(#c963)"><path d="M963.1 388.3C963.7 389.1 965.2 391.4 966.6 392.8C968.0 394.2 969.5 395.8 971.4 396.5C973.3 397.2 975.7 396.7 977.8 396.8C979.9 396.9 982.3 397.0 984.2 397.1C986.1 397.2 987.4 397.6 989.0 397.3C990.6 397.0 992.3 395.7 993.8 395.2C995.3 394.7 996.5 394.0 997.8 394.1C999.1 394.2 1000.3 395.1 1001.8 395.7C1003.3 396.3 1005.0 397.2 1006.6 397.6C1008.2 398.0 1009.8 397.9 1011.5 397.9C1013.2 397.8 1015.1 397.8 1017.0 397.3C1018.9 396.9 1021.2 395.6 1022.7 395.2C1024.2 394.8 1024.6 394.9 1025.9 395.2C1027.2 395.5 1029.1 396.7 1030.7 397.1C1032.3 397.5 1033.6 397.8 1035.5 397.6C1037.4 397.4 1039.8 396.4 1041.9 396.0C1044.0 395.6 1046.2 395.3 1048.3 395.5C1050.4 395.7 1052.8 396.9 1054.7 397.3C1056.6 397.7 1057.6 397.9 1059.5 397.6C1061.4 397.3 1064.0 395.8 1065.9 395.4C1067.8 394.9 1068.8 394.9 1070.7 394.9C1072.6 394.9 1075.0 395.3 1077.1 395.5C1079.2 395.7 1081.6 396.3 1083.5 396.3C1085.4 396.3 1086.7 395.8 1088.3 395.5C1089.9 395.2 1091.8 394.5 1093.1 394.4C1094.4 394.3 1095.0 394.2 1096.3 394.7C1097.6 395.1 1099.8 396.7 1101.1 397.1C1102.4 397.5 1103.1 397.8 1104.3 397.3C1105.5 396.9 1107.1 395.1 1108.3 394.4C1109.5 393.7 1110.3 393.2 1111.5 393.3C1112.7 393.4 1114.1 394.1 1115.6 394.9C1117.1 395.7 1119.1 397.4 1120.4 397.9C1121.7 398.3 1122.3 398.0 1123.6 397.6C1124.9 397.2 1126.8 395.9 1128.4 395.5C1130.0 395.1 1131.1 395.2 1133.2 395.2C1135.3 395.2 1138.1 395.5 1141.2 395.7C1144.3 395.9 1149.1 396.2 1151.6 396.3C1154.1 396.4 1155.3 396.5 1156.0 396.5V400H963Z" fill="rgba(107,95,218,.10)"/><path d="M963.1 388.3C963.7 389.1 965.2 391.4 966.6 392.8C968.0 394.2 969.5 395.8 971.4 396.5C973.3 397.2 975.7 396.7 977.8 396.8C979.9 396.9 982.3 397.0 984.2 397.1C986.1 397.2 987.4 397.6 989.0 397.3C990.6 397.0 992.3 395.7 993.8 395.2C995.3 394.7 996.5 394.0 997.8 394.1C999.1 394.2 1000.3 395.1 1001.8 395.7C1003.3 396.3 1005.0 397.2 1006.6 397.6C1008.2 398.0 1009.8 397.9 1011.5 397.9C1013.2 397.8 1015.1 397.8 1017.0 397.3C1018.9 396.9 1021.2 395.6 1022.7 395.2C1024.2 394.8 1024.6 394.9 1025.9 395.2C1027.2 395.5 1029.1 396.7 1030.7 397.1C1032.3 397.5 1033.6 397.8 1035.5 397.6C1037.4 397.4 1039.8 396.4 1041.9 396.0C1044.0 395.6 1046.2 395.3 1048.3 395.5C1050.4 395.7 1052.8 396.9 1054.7 397.3C1056.6 397.7 1057.6 397.9 1059.5 397.6C1061.4 397.3 1064.0 395.8 1065.9 395.4C1067.8 394.9 1068.8 394.9 1070.7 394.9C1072.6 394.9 1075.0 395.3 1077.1 395.5C1079.2 395.7 1081.6 396.3 1083.5 396.3C1085.4 396.3 1086.7 395.8 1088.3 395.5C1089.9 395.2 1091.8 394.5 1093.1 394.4C1094.4 394.3 1095.0 394.2 1096.3 394.7C1097.6 395.1 1099.8 396.7 1101.1 397.1C1102.4 397.5 1103.1 397.8 1104.3 397.3C1105.5 396.9 1107.1 395.1 1108.3 394.4C1109.5 393.7 1110.3 393.2 1111.5 393.3C1112.7 393.4 1114.1 394.1 1115.6 394.9C1117.1 395.7 1119.1 397.4 1120.4 397.9C1121.7 398.3 1122.3 398.0 1123.6 397.6C1124.9 397.2 1126.8 395.9 1128.4 395.5C1130.0 395.1 1131.1 395.2 1133.2 395.2C1135.3 395.2 1138.1 395.5 1141.2 395.7C1144.3 395.9 1149.1 396.2 1151.6 396.3C1154.1 396.4 1155.3 396.5 1156.0 396.5" fill="none" stroke="#6b5fda" stroke-width="1.400" stroke-linejoin="round"/></g></svg>
<svg style="position:absolute;left:0;top:0" width="1280" height="667" viewBox="0 0 1280 667"><defs><clipPath id="cr"><rect x="755" y="304" width="192" height="95" rx="7.5"/></clipPath></defs><g clip-path="url(#cr)"><path d="M754.500 398.600C790 393 820 390.100 850 390.100S915 393.500 947 398.600V400H754.500Z" fill="rgba(217,83,79,.12)"/><path d="M754.500 398.600C790 393 820 390.100 850 390.100S915 393.500 947 398.600" fill="none" stroke="#d2504c" stroke-width="1.300"/></g></svg>
<svg style="position:absolute;left:0;top:0" width="1280" height="667" viewBox="0 0 1280 667"><path d="M598.500 350.300c6-.500 9-3.200 13-3.400s6 1.600 12 1.700" fill="none" stroke="#7fd47f" stroke-width="1"/><path d="M1008 349.500c6 .8 10-2.600 15-2.700s5 .8 8.500 1" fill="none" stroke="#8d84e0" stroke-width="1.100"/><path d="M623 340.400h58" stroke="#e9e9eb" stroke-width=".8"/><path d="M1050 347.500h60" stroke="#ececee" stroke-width=".8"/></svg>
<span style="position:absolute;left:590.80px;top:350px;font-size:7.5px;line-height:1;font-weight:400;color:#b9b9bf;letter-spacing:0.000px;white-space:pre;transform:scaleX(1.1463);transform-origin:0 0;">t</span>
<span style="position:absolute;left:797.33px;top:346px;font-size:6px;line-height:1;font-weight:400;color:#55555a;letter-spacing:0.000px;white-space:pre;transform:scaleX(1.2906);transform-origin:0 0;">r</span>
<div style="position:absolute;left:337px;top:414px;width:402px;height:280px;background:#fff;border:1px solid #ededee;border-radius:7.5px;box-shadow:0 1px 2px rgba(0,0,0,.04);box-sizing:border-box"></div>
<div style="position:absolute;left:338px;top:452px;width:400px;height:1px;background:#ebebed"></div>
<div style="position:absolute;left:755px;top:414px;width:401px;height:280px;background:#fff;border:1px solid #ededee;border-radius:7.5px;box-shadow:0 1px 2px rgba(0,0,0,.04);box-sizing:border-box"></div>
<div style="position:absolute;left:756px;top:452px;width:399px;height:1px;background:#ebebed"></div>
<span style="position:absolute;left:353.81px;top:429px;font-size:10.4px;line-height:1;font-weight:700;color:#111114;letter-spacing:0.000px;white-space:pre;transform:scaleX(1.1225);transform-origin:0 0;-webkit-text-stroke:0.25px #111114;">Pemasukan</span>
<span style="position:absolute;left:770.72px;top:429px;font-size:10.4px;line-height:1;font-weight:700;color:#111114;letter-spacing:0.000px;white-space:pre;transform:scaleX(1.1207);transform-origin:0 0;-webkit-text-stroke:0.25px #111114;">Pengeluaran</span>
<svg style="position:absolute;left:0;top:0" width="1280" height="667" viewBox="0 0 1280 667" font-family="'Liberation Sans',sans-serif"><path d="M388.2 598.70H714.3" stroke="#ebebed" stroke-width="1"/><text x="385.3" y="601.00" text-anchor="end" font-size="8.5" fill="#737373" letter-spacing="-0.12">0</text><path d="M388.2 585.10H714.3" stroke="#ebebed" stroke-width="1"/><text x="385.3" y="587.40" text-anchor="end" font-size="8.5" fill="#737373" letter-spacing="-0.12">20,000</text><path d="M388.2 571.50H714.3" stroke="#ebebed" stroke-width="1"/><text x="385.3" y="573.80" text-anchor="end" font-size="8.5" fill="#737373" letter-spacing="-0.12">40,000</text><path d="M388.2 557.90H714.3" stroke="#ebebed" stroke-width="1"/><text x="385.3" y="560.20" text-anchor="end" font-size="8.5" fill="#737373" letter-spacing="-0.12">60,000</text><path d="M388.2 544.30H714.3" stroke="#ebebed" stroke-width="1"/><text x="385.3" y="546.60" text-anchor="end" font-size="8.5" fill="#737373" letter-spacing="-0.12">80,000</text><path d="M388.2 530.70H714.3" stroke="#ebebed" stroke-width="1"/><text x="385.3" y="533.00" text-anchor="end" font-size="8.5" fill="#737373" letter-spacing="-0.12">100,000</text><path d="M388.2 517.10H714.3" stroke="#ebebed" stroke-width="1"/><text x="385.3" y="519.40" text-anchor="end" font-size="8.5" fill="#737373" letter-spacing="-0.12">120,000</text><path d="M388.2 503.50H714.3" stroke="#ebebed" stroke-width="1"/><text x="385.3" y="505.80" text-anchor="end" font-size="8.5" fill="#737373" letter-spacing="-0.12">140,000</text><path d="M388.2 489.90H714.3" stroke="#ebebed" stroke-width="1"/><text x="385.3" y="492.20" text-anchor="end" font-size="8.5" fill="#737373" letter-spacing="-0.12">160,000</text><path d="M388.2 476.30H714.3" stroke="#ebebed" stroke-width="1"/><text x="385.3" y="478.10" text-anchor="end" font-size="8.5" fill="#737373" letter-spacing="-0.12">180,000</text><rect x="426.6" y="494.5" width="2.50" height="104.20" fill="#6a5fd0"/><rect x="430.2" y="585.2" width="2.30" height="13.50" fill="#6a5fd0"/><rect x="443.6" y="588.5" width="2.30" height="10.20" fill="#6a5fd0"/><rect x="453.4" y="561.3" width="2.50" height="37.40" fill="#6a5fd0"/><rect x="457" y="595.2" width="2.10" height="3.50" fill="#6a5fd0"/><rect x="460.2" y="594" width="2.50" height="4.70" fill="#6a5fd0"/><rect x="504" y="565.7" width="2.40" height="33.00" fill="#6a5fd0"/><rect x="510.5" y="579.1" width="2.40" height="19.60" fill="#6a5fd0"/><rect x="520.6" y="577" width="2.40" height="21.70" fill="#6a5fd0"/><rect x="527.3" y="595.4" width="2.50" height="3.30" fill="#6a5fd0"/><rect x="537.3" y="569" width="2.50" height="29.70" fill="#6a5fd0"/><rect x="540.8" y="574.9" width="2.30" height="23.80" fill="#6a5fd0"/><rect x="580.8" y="583.9" width="2.40" height="14.80" fill="#6a5fd0"/><rect x="584.2" y="565" width="2.40" height="33.70" fill="#6a5fd0"/><rect x="587.7" y="592.3" width="2.30" height="6.40" fill="#6a5fd0"/><rect x="604.3" y="530.2" width="2.50" height="68.50" fill="#6a5fd0"/><rect x="617.5" y="577" width="2.40" height="21.70" fill="#6a5fd0"/><rect x="620.9" y="573" width="2.40" height="25.70" fill="#6a5fd0"/><rect x="661.2" y="595" width="2.50" height="3.70" fill="#6a5fd0"/><rect x="664.6" y="573" width="2.30" height="25.70" fill="#6a5fd0"/><rect x="668" y="482" width="2.50" height="116.70" fill="#6a5fd0"/><text x="399.70" y="611.6" text-anchor="end" font-size="8.5" fill="#737373" textLength="21.3" lengthAdjust="spacing" transform="rotate(-45 399.70 611.6)">00:00</text><text x="416.47" y="611.6" text-anchor="end" font-size="8.5" fill="#737373" textLength="21.3" lengthAdjust="spacing" transform="rotate(-45 416.47 611.6)">05:00</text><text x="433.24" y="611.6" text-anchor="end" font-size="8.5" fill="#737373" textLength="21.3" lengthAdjust="spacing" transform="rotate(-45 433.24 611.6)">10:00</text><text x="450.01" y="611.6" text-anchor="end" font-size="8.5" fill="#737373" textLength="21.3" lengthAdjust="spacing" transform="rotate(-45 450.01 611.6)">15:00</text><text x="466.78" y="611.6" text-anchor="end" font-size="8.5" fill="#737373" textLength="21.3" lengthAdjust="spacing" transform="rotate(-45 466.78 611.6)">20:00</text><text x="483.55" y="611.6" text-anchor="end" font-size="8.5" fill="#737373" textLength="21.3" lengthAdjust="spacing" transform="rotate(-45 483.55 611.6)">01:00</text><text x="500.32" y="611.6" text-anchor="end" font-size="8.5" fill="#737373" textLength="21.3" lengthAdjust="spacing" transform="rotate(-45 500.32 611.6)">06:00</text><text x="517.09" y="611.6" text-anchor="end" font-size="8.5" fill="#737373" textLength="21.3" lengthAdjust="spacing" transform="rotate(-45 517.09 611.6)">11:00</text><text x="533.86" y="611.6" text-anchor="end" font-size="8.5" fill="#737373" textLength="21.3" lengthAdjust="spacing" transform="rotate(-45 533.86 611.6)">16:00</text><text x="550.63" y="611.6" text-anchor="end" font-size="8.5" fill="#737373" textLength="21.3" lengthAdjust="spacing" transform="rotate(-45 550.63 611.6)">21:00</text><text x="567.40" y="611.6" text-anchor="end" font-size="8.5" fill="#737373" textLength="21.3" lengthAdjust="spacing" transform="rotate(-45 567.40 611.6)">02:00</text><text x="584.17" y="611.6" text-anchor="end" font-size="8.5" fill="#737373" textLength="21.3" lengthAdjust="spacing" transform="rotate(-45 584.17 611.6)">07:00</text><text x="600.94" y="611.6" text-anchor="end" font-size="8.5" fill="#737373" textLength="21.3" lengthAdjust="spacing" transform="rotate(-45 600.94 611.6)">12:00</text><text x="617.71" y="611.6" text-anchor="end" font-size="8.5" fill="#737373" textLength="21.3" lengthAdjust="spacing" transform="rotate(-45 617.71 611.6)">17:00</text><text x="634.48" y="611.6" text-anchor="end" font-size="8.5" fill="#737373" textLength="21.3" lengthAdjust="spacing" transform="rotate(-45 634.48 611.6)">22:00</text><text x="651.25" y="611.6" text-anchor="end" font-size="8.5" fill="#737373" textLength="21.3" lengthAdjust="spacing" transform="rotate(-45 651.25 611.6)">03:00</text><text x="668.02" y="611.6" text-anchor="end" font-size="8.5" fill="#737373" textLength="21.3" lengthAdjust="spacing" transform="rotate(-45 668.02 611.6)">08:00</text><text x="684.79" y="611.6" text-anchor="end" font-size="8.5" fill="#737373" textLength="21.3" lengthAdjust="spacing" transform="rotate(-45 684.79 611.6)">13:00</text><text x="701.56" y="611.6" text-anchor="end" font-size="8.5" fill="#737373" textLength="21.3" lengthAdjust="spacing" transform="rotate(-45 701.56 611.6)">18:00</text><text x="718.33" y="611.6" text-anchor="end" font-size="8.5" fill="#737373" textLength="21.3" lengthAdjust="spacing" transform="rotate(-45 718.33 611.6)">23:00</text><rect x="493.8" y="638.300" width="7.800" height="7.800" fill="#eceafb" stroke="#6a5fd0" stroke-width="1.200"/></svg>
<span style="position:absolute;left:505.70px;top:638px;font-size:9.2px;line-height:1;font-weight:400;color:#737373;letter-spacing:-0.065px;white-space:pre;">Pemasukan Harian</span>
<svg style="position:absolute;left:0;top:0" width="1280" height="667" viewBox="0 0 1280 667" font-family="'Liberation Sans',sans-serif"><path d="M806.5 598.70H1131.7" stroke="#ebebed" stroke-width="1"/><text x="804.5" y="601.00" text-anchor="end" font-size="8.5" fill="#737373" letter-spacing="0.15">0</text><path d="M806.5 578.30H1131.7" stroke="#ebebed" stroke-width="1"/><text x="804.5" y="580.60" text-anchor="end" font-size="8.5" fill="#737373" letter-spacing="0.15">100,000</text><path d="M806.5 557.90H1131.7" stroke="#ebebed" stroke-width="1"/><text x="804.5" y="560.20" text-anchor="end" font-size="8.5" fill="#737373" letter-spacing="0.15">200,000</text><path d="M806.5 537.50H1131.7" stroke="#ebebed" stroke-width="1"/><text x="804.5" y="539.80" text-anchor="end" font-size="8.5" fill="#737373" letter-spacing="0.15">300,000</text><path d="M806.5 517.10H1131.7" stroke="#ebebed" stroke-width="1"/><text x="804.5" y="519.40" text-anchor="end" font-size="8.5" fill="#737373" letter-spacing="0.15">400,000</text><path d="M806.5 496.70H1131.7" stroke="#ebebed" stroke-width="1"/><text x="804.5" y="499.00" text-anchor="end" font-size="8.5" fill="#737373" letter-spacing="0.15">500,000</text><path d="M806.5 476.30H1131.7" stroke="#ebebed" stroke-width="1"/><text x="804.5" y="478.10" text-anchor="end" font-size="8.5" fill="#737373" letter-spacing="0.15">600,000</text><rect x="845.7" y="595.7" width="2.40" height="3.00" fill="#c4514e"/><rect x="925.5" y="493.9" width="2.50" height="104.80" fill="#c4514e"/><rect x="1075" y="575.5" width="2.40" height="23.20" fill="#c4514e"/><text x="819.00" y="611.6" text-anchor="end" font-size="8.5" fill="#737373" textLength="21.3" lengthAdjust="spacing" transform="rotate(-45 819.00 611.6)">00:00</text><text x="835.65" y="611.6" text-anchor="end" font-size="8.5" fill="#737373" textLength="21.3" lengthAdjust="spacing" transform="rotate(-45 835.65 611.6)">05:00</text><text x="852.30" y="611.6" text-anchor="end" font-size="8.5" fill="#737373" textLength="21.3" lengthAdjust="spacing" transform="rotate(-45 852.30 611.6)">10:00</text><text x="868.95" y="611.6" text-anchor="end" font-size="8.5" fill="#737373" textLength="21.3" lengthAdjust="spacing" transform="rotate(-45 868.95 611.6)">15:00</text><text x="885.60" y="611.6" text-anchor="end" font-size="8.5" fill="#737373" textLength="21.3" lengthAdjust="spacing" transform="rotate(-45 885.60 611.6)">20:00</text><text x="902.25" y="611.6" text-anchor="end" font-size="8.5" fill="#737373" textLength="21.3" lengthAdjust="spacing" transform="rotate(-45 902.25 611.6)">01:00</text><text x="918.90" y="611.6" text-anchor="end" font-size="8.5" fill="#737373" textLength="21.3" lengthAdjust="spacing" transform="rotate(-45 918.90 611.6)">06:00</text><text x="935.55" y="611.6" text-anchor="end" font-size="8.5" fill="#737373" textLength="21.3" lengthAdjust="spacing" transform="rotate(-45 935.55 611.6)">11:00</text><text x="952.20" y="611.6" text-anchor="end" font-size="8.5" fill="#737373" textLength="21.3" lengthAdjust="spacing" transform="rotate(-45 952.20 611.6)">16:00</text><text x="968.85" y="611.6" text-anchor="end" font-size="8.5" fill="#737373" textLength="21.3" lengthAdjust="spacing" transform="rotate(-45 968.85 611.6)">21:00</text><text x="985.50" y="611.6" text-anchor="end" font-size="8.5" fill="#737373" textLength="21.3" lengthAdjust="spacing" transform="rotate(-45 985.50 611.6)">02:00</text><text x="1002.15" y="611.6" text-anchor="end" font-size="8.5" fill="#737373" textLength="21.3" lengthAdjust="spacing" transform="rotate(-45 1002.15 611.6)">07:00</text><text x="1018.80" y="611.6" text-anchor="end" font-size="8.5" fill="#737373" textLength="21.3" lengthAdjust="spacing" transform="rotate(-45 1018.80 611.6)">12:00</text><text x="1035.45" y="611.6" text-anchor="end" font-size="8.5" fill="#737373" textLength="21.3" lengthAdjust="spacing" transform="rotate(-45 1035.45 611.6)">17:00</text><text x="1052.10" y="611.6" text-anchor="end" font-size="8.5" fill="#737373" textLength="21.3" lengthAdjust="spacing" transform="rotate(-45 1052.10 611.6)">22:00</text><text x="1068.75" y="611.6" text-anchor="end" font-size="8.5" fill="#737373" textLength="21.3" lengthAdjust="spacing" transform="rotate(-45 1068.75 611.6)">03:00</text><text x="1085.40" y="611.6" text-anchor="end" font-size="8.5" fill="#737373" textLength="21.3" lengthAdjust="spacing" transform="rotate(-45 1085.40 611.6)">08:00</text><text x="1102.05" y="611.6" text-anchor="end" font-size="8.5" fill="#737373" textLength="21.3" lengthAdjust="spacing" transform="rotate(-45 1102.05 611.6)">13:00</text><text x="1118.70" y="611.6" text-anchor="end" font-size="8.5" fill="#737373" textLength="21.3" lengthAdjust="spacing" transform="rotate(-45 1118.70 611.6)">18:00</text><text x="1135.35" y="611.6" text-anchor="end" font-size="8.5" fill="#737373" textLength="21.3" lengthAdjust="spacing" transform="rotate(-45 1135.35 611.6)">23:00</text><rect x="908.7" y="638.300" width="7.800" height="7.800" fill="#fdf3f2" stroke="#c4514e" stroke-width="1.200"/></svg>
<span style="position:absolute;left:920.59px;top:638px;font-size:9.2px;line-height:1;font-weight:400;color:#737373;letter-spacing:-0.045px;white-space:pre;">Pengeluaran Harian</span>
<div style="position:absolute;left:603px;top:344px;width:48px;height:17px;background:#f3f3f4;border-radius:8px;filter:blur(3px);opacity:.8"></div>
<div style="position:absolute;left:808px;top:340px;width:38px;height:20px;background:#f3f3f4;border-radius:8px;filter:blur(3px);opacity:.8"></div>
<div style="position:absolute;left:1014px;top:342px;width:80px;height:20px;background:#f3f3f4;border-radius:8px;filter:blur(3px);opacity:.8"></div>
</div>
</body></html>
